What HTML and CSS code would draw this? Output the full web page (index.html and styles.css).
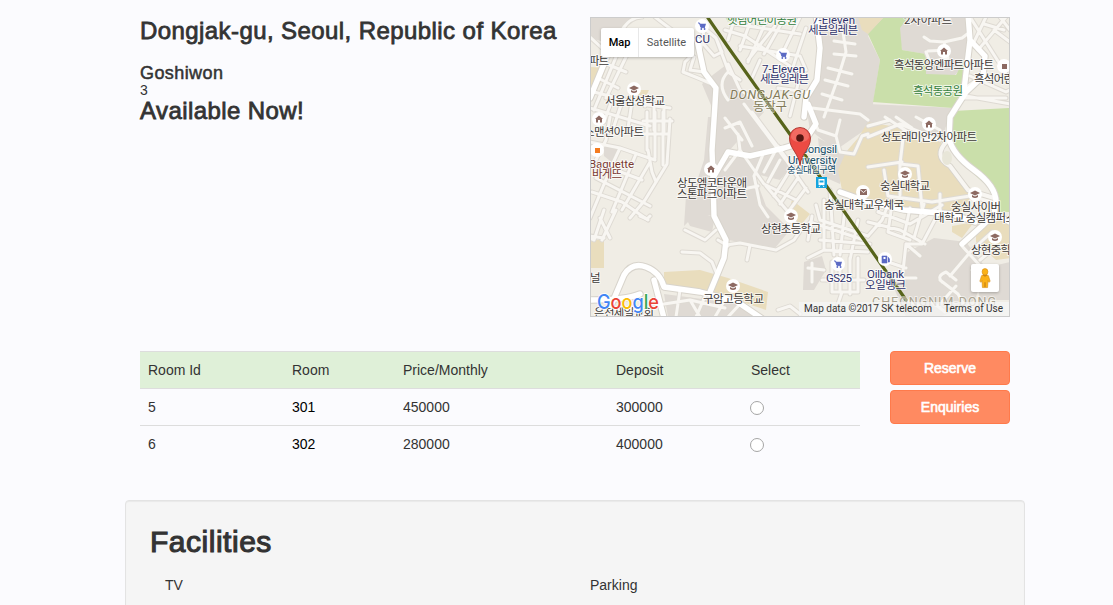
FILE: index.html
```html
<!DOCTYPE html>
<html lang="en">
<head>
<meta charset="utf-8">
<title>Goshiwon - Dongjak-gu, Seoul</title>
<link rel="stylesheet" href="styles.css">
</head>
<body>
<main class="page">
  <section class="overview">
    <div class="summary">
      <h1 class="title">Dongjak-gu, Seoul, Republic of Korea</h1>
      <h2 class="kind">Goshiwon</h2>
      <div class="count">3</div>
      <h2 class="available">Available Now!</h2>
    </div>
    <div class="map">
      <svg class="map-canvas" width="420" height="300" viewBox="590 17 420 300">
        <defs>
          <g id="minor">
            <!-- north-west -->
            <path d="M590 37L602 48M622 30Q630 17 642 17M608 57L590 96M616 57L594 110M626 57L606 98M602 62L626 72M598 78L618 88M594 92L640 104M590 108L650 126M612 100L604 122M622 102L614 126M634 88L628 128M654 104V130M664 106V132M640 104L670 108M645 97V106"/>
            <path d="M655 17L664 24 672 30M690 57L685 62 683 72 698 78 712 84M694 57L690 70 704 72M700 40L714 56 722 52 716 38 704 28M704 30L700 52M716 38L728 70M728 100Q716 84 728 72L740 80"/>
            <!-- west -->
            <path d="M590 142L620 148 655 160M610 117L606 140 596 160M647 112V150M655 112V158M663 112V165M670 119L667 164 645 200 630 218M643 121H672M640 134H669M648 150L652 172 656 182M620 148L612 165 590 218M636 154L612 212M650 162L622 210M596 178L650 206M592 192L622 202 648 220M602 165L642 180M610 238L600 218M604 210L594 240 590 238M616 210L602 240"/>
            <path d="M590 236L604 238M640 216L647 219 650 216M682 252L700 253 712 262 716 272M685 230L705 240 716 230"/>
            <!-- north centre -->
            <path d="M725 30L745 36 790 66M735 17L728 40M752 17L740 50M768 17L748 62M785 17L764 54M800 17L784 50M735 24L800 34M740 46L800 56M748 60L775 26M800 56L806 70M778 88L806 92M728 64L740 90 756 100M760 60L752 78M798 84L790 116M806 28L792 70"/>
            <path d="M843 32L846 52 838 78 824 117M834 41L855 44M834 54L856 56M828 68L852 74M825 80L848 86M822 94L842 100"/>
            <!-- centre -->
            <path d="M725 128L740 122 752 146M725 118L742 140M744 104L786 160 808 192M752 112L798 174M740 150L764 184 796 200M764 152L754 176M778 146L764 172M780 160L768 182M790 170L774 196M798 178L780 204M806 188L788 212M766 186L790 214 800 230M754 176L760 205 768 217M738 190L758 186M725 170L740 150 738 134M808 104L818 130 836 136 840 120M812 108L860 114 868 120M836 136L840 152 854 154 862 136 868 134"/>
            <!-- north east -->
            <path d="M924 37L930 41 944 42M944 42L962 38 970 32M944 42L948 58 930 62 926 52M928 51L948 50M970 17L1010 80M986 17L974 42M1006 17L978 50M984 24L1004 30M994 30L1010 42M1000 17L1010 30M965 88L984 75M966 96L1010 104M970 76L1006 92 1010 90M962 98L1006 98"/>
            <path d="M868 137L900 124 940 140M868 167L902 162M904 130L900 164 918 166 922 208M885 117L920 140 934 138M916 117L940 130M896 117L912 128M884 170L888 196 932 202 970 196 992 202M900 164V195M940 194V210M868 126L890 120"/>
            <!-- south centre -->
            <path d="M816 205L820 220 868 236M830 190L834 255M845 208L840 255M858 220L850 260M812 216L808 240M810 222L864 240M824 200L824 250 868 252M820 240L870 244M824 250L808 258M832 262L832 292H858V258M840 262V292M850 258V294M822 280H864M842 292L836 310M812 263L812 282M808 268L824 270"/>
            <path d="M868 236L882 220 890 200M868 222L900 230 925 244M878 212L910 224 942 205M892 204L888 232 910 240M910 208L904 236M924 204L914 238M940 210L922 244 906 244 902 280M888 262L906 268M888 278L916 278M906 244L920 256M940 280L958 294 970 316M950 276L972 250 992 232M962 246L982 268M942 282Q936 276 946 272L956 280M956 286L940 304M972 270L990 278M980 260L992 250M906 300L930 310M930 300L945 312"/>
            <!-- south -->
            <path d="M778 310L790 306 800 314M664 304L690 300 700 317M680 290L676 317M706 294L696 317M726 298L715 317M740 304L728 317M690 300L725 308M726 245L740 243 776 250 794 240 802 228M750 245L747 260M728 246L718 240"/>
          </g>
          <g id="major">
            <path d="M590 98L604 64M697 40L704 72 716 88 714 120 712 150 713 178 714 216 726 240 724 258 710 292"/>
            <path d="M816 14L820 48 817 80 806 98 804 117M713 178L728 152 750 156 784 148 804 142 816 124 808 104"/>
            <path d="M610 308L624 275Q632 262 646 267T664 287L700 292 736 301 764 320M654 280L664 318"/>
            <path d="M968 14L970 40 985 56 983 76 966 92 950 117 949 138Q952 154 974 170T996 202L994 214M970 40L964 90"/>
            <path d="M840 192L868 202 904 210 952 214 975 222M1010 222L994 214 982 226 962 244"/>
            <path d="M590 300Q626 300 640 294"/>
          </g>
          <g id="cap">
            <circle r="7" fill="#fff"/>
            <path d="M-5-1L0-3.5 5-1 0 1.5ZM-3 1V3Q0 5 3 3V1L0 2.5Z" fill="#8d6a62"/>
          </g>
          <g id="home">
            <circle r="7" fill="#fff"/>
            <path d="M-4 0L0-3.6 4 0H3V3.5H1V1H-1V3.5H-3V0Z" fill="#8d6a62"/>
          </g>
          <g id="cart">
            <circle r="7" fill="#fff"/>
            <path d="M-4-3H-2.5L-1 1.6H3" fill="none" stroke="#5b6ac4"/>
            <path d="M-2.3-2.3H4L3 1H-1.3Z" fill="#5b6ac4"/>
            <circle cx="-.7" cy="3" r=".9" fill="#5b6ac4"/><circle cx="2.6" cy="3" r=".9" fill="#5b6ac4"/>
          </g>
        </defs>

        <rect x="590" y="17" width="420" height="300" fill="#f0ede5"/>
        <g fill="#dfdad4">
          <path d="M590 17H632L622 32 604 42 590 38ZM604 143L618 148 614 164 604 156Z"/>
          <path d="M702 84L714 74 730 62 742 90 764 112 744 134 728 152 714 176 713 110ZM708 117H714V176L728 158 750 158 760 190 766 206 790 230 775 248 740 242 728 240 716 214 690 220 684 226 686 196 696 184 704 160Z"/>
          <path d="M735 100L748 112 790 168 780 180 740 170ZM820 24L858 17H885L868 36 880 60 873 104 868 117 808 117 806 100 820 82Z"/>
          <path d="M904 17H968V60L955 75H925V54L902 50 898 28ZM868 104L955 108 948 120 942 138 912 128 880 120 856 136 836 150 810 130 806 106Z"/>
          <path d="M818 138L846 152 840 184 822 176ZM685 216H715L712 232 690 226ZM804 262L822 256 826 270 814 290 803 290Z"/>
          <path d="M664 294L740 304 755 317H668ZM904 254L934 238 966 242 986 268 975 300 940 317H906L894 288ZM975 270L1010 262V300H980Z"/>
        </g>
        <g fill="#cadfaa">
          <path d="M868 34L884 17H908L900 28 902 50 926 54V74L956 75 966 56 963 88 953 108 873 102 880 60Z"/>
          <path d="M953 111L1010 108V212L998 212 994 192 960 162 951 144Z"/>
          <path d="M725 17H740L728 22Z"/>
        </g>
        <g fill="#e9ddbd">
          <path d="M858 17H884L868 34 862 30ZM590 67L606 68 600 84 590 92ZM590 240H604V268H590Z"/>
          <path d="M868 122L902 128 942 140 938 156 952 168 974 192 960 214 904 208 870 200 842 190 838 170 846 152 858 138Z"/>
          <path d="M664 272L700 270 728 278 768 292 766 310 736 300 664 286ZM792 200L810 214 800 226 788 214ZM638 90L649 90 646 96 638 95ZM976 226L1010 218V258L996 260 976 242ZM952 226L974 222 962 238 952 232Z"/>
        </g>
        <g fill="none" stroke-linejoin="round" stroke-linecap="round">
          <use href="#minor" stroke="#dedad3" stroke-width="5"/>
          <path d="M948 140Q932 156 950 166L968 190 994 198" stroke="#d8d4cc" stroke-width="6"/>
          <use href="#major" stroke="#d8d4cc" stroke-width="7.4"/>
          <use href="#minor" stroke="#f8f6f2" stroke-width="3"/>
          <path d="M948 140Q932 156 950 166L968 190 994 198" stroke="#f8f6f2" stroke-width="4"/>
          <use href="#major" stroke="#fff" stroke-width="5.4"/>
          <path d="M706 15L728 47 779 119 802 151 906 300" stroke="#57641b" stroke-width="3.2"/>
        </g>
        <ellipse cx="947" cy="158" rx="5" ry="7" fill="#e8e6d8"/>

        <use href="#cart" x="702" y="26"/><use href="#cart" x="783" y="55"/><use href="#cart" x="838" y="264"/>
        <use href="#cap" x="634" y="89"/><use href="#cap" x="791" y="216"/><use href="#cap" x="905" y="174"/><use href="#cap" x="975" y="194"/><use href="#cap" x="995" y="237"/><use href="#cap" x="733" y="286"/>
        <use href="#home" x="944" y="51"/><use href="#home" x="599" y="119"/><use href="#home" x="711" y="169"/><use href="#home" x="929" y="124"/>
        <circle cx="1004" cy="66" r="7" fill="#fff"/><rect x="1002" y="64" width="5" height="5" fill="#8d6a62"/>
        <circle cx="597" cy="150" r="7" fill="#fff"/><rect x="595" y="148" width="5" height="5" fill="#f57c1f"/>
        <circle cx="863" cy="192" r="7" fill="#fff"/><rect x="860" y="189" width="7" height="6" fill="#8d6a62"/><path d="M860 189.500L863.500 192.500 867 189.500" fill="none" stroke="#fff" stroke-width=".9"/>
        <circle cx="885" cy="259" r="7" fill="#fff"/><path d="M882 256H887V263H882ZM888 257L889.500 259V262H888" fill="#5b6ac4" stroke="#5b6ac4" stroke-width=".6"/><rect x="883.500" y="257" width="2" height="2" fill="#fff"/>

        <g class="label">
          <text x="589" y="65" textLength="20">파트</text>
          <text x="605" y="105" textLength="60">서울삼성학교</text>
          <text x="584" y="136" textLength="60">스맨션아파트</text>
          <text x="677" y="187" textLength="70">상도엠코타운애</text>
          <text x="677" y="198" textLength="70">스톤파크아파트</text>
          <text x="761" y="233" textLength="60">상현초등학교</text>
          <text x="703" y="303" textLength="61">구암고등학교</text>
          <text x="590" y="282">널</text>
          <text x="594" y="317" textLength="60">은천제일교회</text>
          <text x="904" y="24" textLength="48">2차아파트</text>
          <text x="894" y="69" textLength="100">흑석동양엔파트아파트</text>
          <text x="974" y="83" textLength="50">흑석어린이</text>
          <text x="881" y="141" textLength="96">상도래미안2차아파트</text>
          <text x="880" y="190" textLength="50">숭실대학교</text>
          <text x="824" y="209" textLength="80">숭실대학교우체국</text>
          <text x="951" y="211" textLength="50">숭실사이버</text>
          <text x="934" y="222" textLength="82">대학교 숭실캠퍼스</text>
          <text x="971" y="254" textLength="50">상현중학교</text>
        </g>
        <g class="label green">
          <text x="727" y="24" textLength="70">햇님어린이공원</text>
          <text x="913" y="95" textLength="50">흑석동공원</text>
        </g>
        <g class="label brown">
          <text x="589" y="168" textLength="45">Baguette</text>
          <text x="592" y="178" textLength="30">바게뜨</text>
        </g>
        <g class="label navy">
          <text x="695" y="43" textLength="15">CU</text>
          <text x="812" y="24" textLength="43">7-Eleven</text>
          <text x="808" y="34" textLength="50">세븐일레븐</text>
          <text x="762" y="73" textLength="43">7-Eleven</text>
          <text x="760" y="83" textLength="49">세븐일레븐</text>
          <text x="826" y="282" textLength="26">GS25</text>
          <text x="867" y="278" textLength="37">Oilbank</text>
          <text x="865" y="289" textLength="41">오일뱅크</text>
        </g>
        <g class="label district">
          <text x="730" y="99" textLength="80" font-style="italic">DONGJAK-GU</text>
          <text x="753" y="111" textLength="34">동작구</text>
        </g>
        <text class="label district pale" x="872" y="306" textLength="124" font-style="italic">CHEONGNIM-DONG</text>
        <g class="label station">
          <text x="795" y="153" textLength="42">Soongsil</text>
          <text x="788" y="164" textLength="49">University</text>
          <text class="small" x="787" y="173" textLength="49">숭실대입구역</text>
        </g>
        <rect x="816" y="177" width="11" height="11" fill="#15a5df"/>
        <path d="M818.500 179H824.500V185H818.500Z" fill="#fff"/><path d="M819.500 180.500H823.500V182.500H819.500Z" fill="#15a5df"/><path d="M819 187L820 185.500M824 187L823 185.500" stroke="#fff"/>
        <path d="M800 165.500C798.800 153 789.500 149 789.500 138A10.500 10.500 0 0 1 810.500 138C810.500 149 801.200 153 800 165.500Z" fill="#ec4b43" stroke="#a9332d" stroke-width=".9"/>
        <path d="M791 137A9 9 0 0 1 809 137Q808 142 800 142T791 137Z" fill="#f78a80" opacity=".5"/>
        <circle cx="800" cy="138" r="3.800" fill="#561611"/>

        <rect x="799" y="302" width="211" height="15" fill="#f5f5f5" opacity=".75"/>
        <text class="logo" x="597" y="309" textLength="62" lengthAdjust="spacingAndGlyphs"><tspan fill="#4285f4">G</tspan><tspan fill="#ea4335">o</tspan><tspan fill="#fbbc05">o</tspan><tspan fill="#4285f4">g</tspan><tspan fill="#34a853">l</tspan><tspan fill="#ea4335">e</tspan></text>
        <text class="credit" x="804" y="312" textLength="128">Map data ©2017 SK telecom</text>
        <text class="credit" x="944" y="312" textLength="59">Terms of Use</text>
      </svg>
      <div class="map-type"><span class="type on">Map</span><span class="type">Satellite</span></div>
      <div class="pegman">
        <svg width="12" height="21" viewBox="0 0 14 22" preserveAspectRatio="none">
          <path d="M3 8Q7 5.500 11 8L13 14 11.500 15 10.500 13 10 20.500H4L3.500 13 2.500 15 1 14Z" fill="#fbb117" stroke="#d68f1c" stroke-width=".7"/>
          <circle cx="7" cy="4" r="3.400" fill="#fbb117" stroke="#d68f1c" stroke-width=".7"/>
          <path d="M5 7.500Q7 9.500 9 7.500M7 15V20" fill="none" stroke="#b66f12"/>
        </svg>
      </div>
    </div>
  </section>

  <section class="booking">
    <table class="rooms">
      <colgroup><col class="c-id"><col class="c-room"><col class="c-price"><col class="c-deposit"><col></colgroup>
      <tr class="head"><td>Room Id</td><td>Room</td><td>Price/Monthly</td><td>Deposit</td><td>Select</td></tr>
      <tr><td>5</td><td class="link">301</td><td>450000</td><td>300000</td><td><input class="pick" type="radio" name="room"></td></tr>
      <tr><td>6</td><td class="link">302</td><td>280000</td><td>400000</td><td><input class="pick" type="radio" name="room"></td></tr>
    </table>
    <div class="actions">
      <button class="btn">Reserve</button>
      <button class="btn">Enquiries</button>
    </div>
  </section>

  <section class="well">
    <h2 class="well-title">Facilities</h2>
    <div class="facilities"><div>TV</div><div>Parking</div></div>
  </section>
</main>
</body>
</html>
```
FILE: styles.css
```css
* { box-sizing: border-box; }
body {
  margin: 0;
  background: #fbfbfe;
  color: #333;
  font: 14px/20px "Liberation Sans", Arial, sans-serif;
}
h1, h2 { margin: 0; font-weight: 400; letter-spacing: .42px; -webkit-text-stroke: .8px #333; }
.page {
  width: 900px;
  height: 100vh;
  margin-left: 125px;
  padding-top: 17px;
  overflow: hidden;
}
.overview { display: flex; gap: 30px; padding: 0 15px; }
.summary { width: 420px; padding-top: 1px; }
.title { font-size: 24px; line-height: 26px; margin-bottom: 19px; white-space: nowrap; }
.kind { font-size: 18px; line-height: 20px; -webkit-text-stroke-width: .5px; }
.count { line-height: 15px; }
.available { font-size: 24px; line-height: 26px; }

.map { position: relative; width: 420px; height: 300px; border: 1px solid #ccc; overflow: hidden; }
.map-canvas { display: block; margin: -1px; }
.label {
  font: 11.5px Roboto, "Noto Sans CJK KR", sans-serif;
  fill: #3d3937;
  stroke: #fff;
  stroke-opacity: .7;
  stroke-width: 2px;
  stroke-linejoin: round;
  paint-order: stroke;
}
.green { fill: #33803c; }
.brown { fill: #7a3b32; }
.navy { fill: #30336b; }
.district { fill: #827a58; font-size: 12.5px; stroke-opacity: .5; }
.pale { fill: #a9a28e; }
.station { fill: #174e69; }
.small { font-size: 9.5px; }
.logo { font: 500 20px Inter, sans-serif; stroke: #fff; stroke-width: 1.5px; paint-order: stroke; }
.credit { font: 10px Roboto, sans-serif; fill: #333; }
.map-type {
  position: absolute;
  left: 10px;
  top: 10px;
  display: flex;
  height: 29px;
  background: #fff;
  border-radius: 2px;
  box-shadow: 0 1px 3px rgba(0,0,0,.25);
  font: 11px/29px Roboto, sans-serif;
  color: #565656;
}
.type { width: 55px; text-align: center; }
.on { width: 38px; border-right: 1px solid #e8e8e8; color: #000; font-weight: 500; }
.pegman {
  position: absolute;
  right: 10px;
  bottom: 24px;
  display: grid;
  place-items: center;
  width: 28px;
  height: 28px;
  background: #fff;
  border-radius: 2px;
  box-shadow: 0 1px 3px rgba(0,0,0,.25);
}

.booking { display: flex; gap: 30px; margin-top: 34px; padding: 0 15px; }
.rooms { width: 720px; height: 111px; table-layout: fixed; border-collapse: separate; border-spacing: 0; }
.rooms td { height: 37px; padding: 0 8px; border-top: 1px solid #ddd; }
.rooms .head td { background: #dff0d8; }
.rooms .link { color: #000; }
.c-id { width: 144px; }
.c-room { width: 111px; }
.c-price { width: 213px; }
.c-deposit { width: 135px; }
.pick {
  display: block;
  appearance: none;
  width: 14px;
  height: 14px;
  margin: 2px 0 0 -1px;
  border: 1px solid #a5a5a5;
  border-radius: 50%;
  background: #fff;
}
.actions { display: flex; flex-direction: column; gap: 5px; width: 120px; }
.btn {
  height: 34px;
  padding: 0;
  border: 1px solid #ff7a4b;
  border-radius: 4px;
  background: #ff8a61;
  color: #fff;
  font: 14px/20px "Liberation Sans", Arial, sans-serif;
  -webkit-text-stroke: .6px #fff;
}

.well {
  height: 200px;
  margin-top: 38px;
  padding: 24px;
  border: 1px solid #e3e3e3;
  border-radius: 4px;
  background: #f5f5f5;
  box-shadow: inset 0 1px 1px rgba(0,0,0,.05);
}
.well-title { font-size: 30px; line-height: 33px; margin-bottom: 17px; letter-spacing: .52px; -webkit-text-stroke-width: 1.1px; }
.facilities { display: grid; grid-template-columns: 425px 425px; }
.facilities div { padding-left: 15px; }
```
